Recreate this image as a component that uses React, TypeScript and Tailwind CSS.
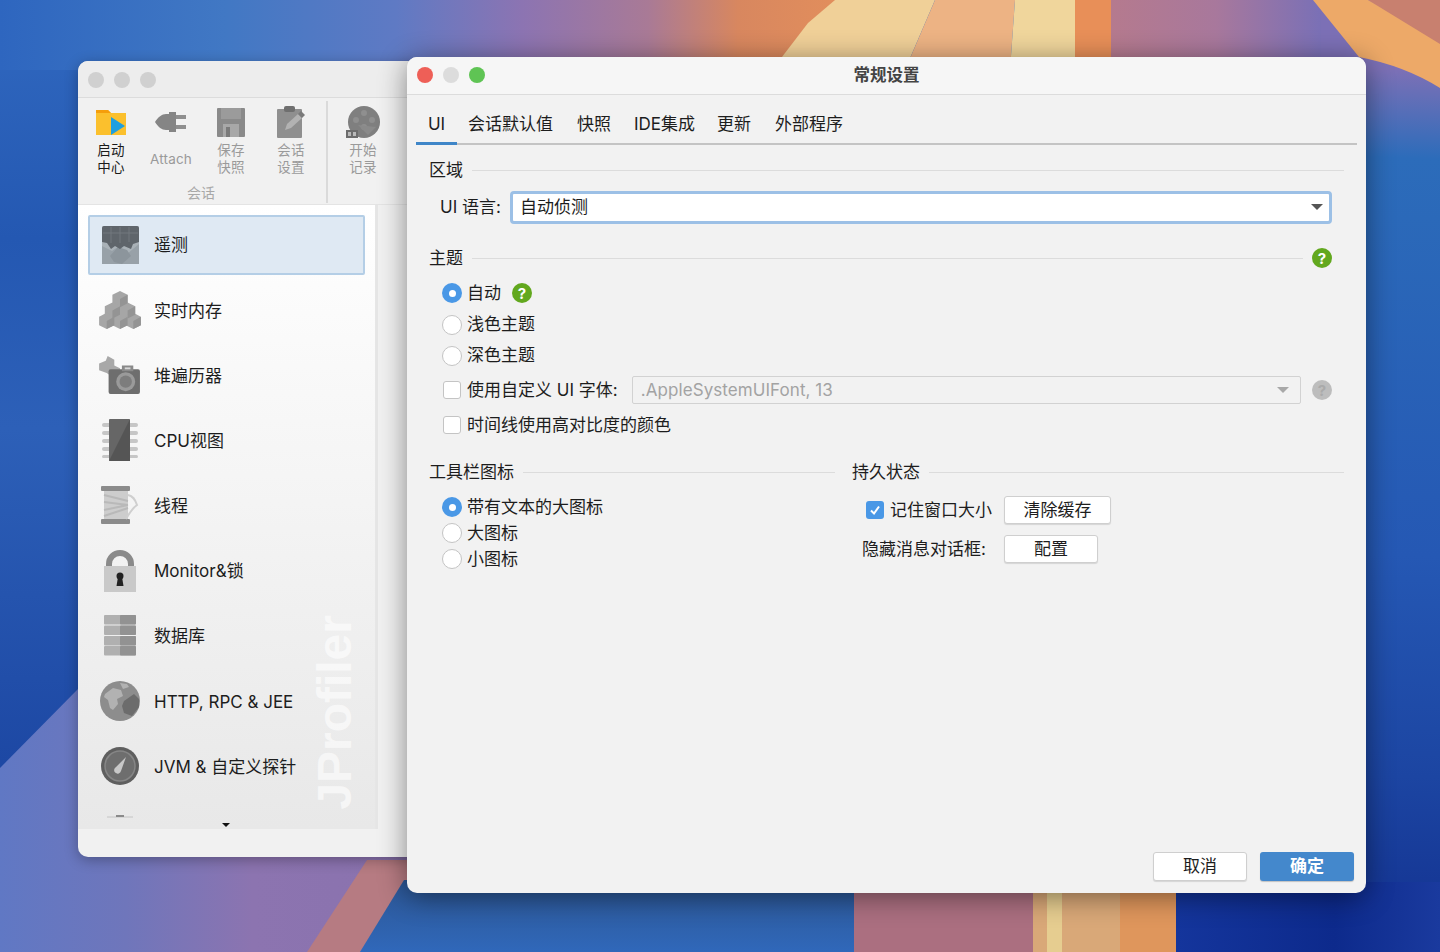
const SANS = "font-['Inter','Noto_Sans_CJK_SC',sans-serif]";

function Wallpaper() {
  return (
    <svg className="absolute inset-0 h-full w-full" viewBox="0 0 1440 952" preserveAspectRatio="none">
      <defs>
        <linearGradient id="left" x1="0" y1="0" x2="0" y2="1">
          <stop offset="0" stopColor="#3169c0" />
          <stop offset="0.25" stopColor="#2458b2" />
          <stop offset="0.45" stopColor="#2d60b8" />
          <stop offset="0.8" stopColor="#1d48a4" />
          <stop offset="1" stopColor="#1d48a4" />
        </linearGradient>
        <linearGradient id="top" x1="0" y1="0" x2="1" y2="0">
          <stop offset="0" stopColor="#2e66bf" />
          <stop offset="0.25" stopColor="#4178c4" />
          <stop offset="0.44" stopColor="#5f7ac4" />
          <stop offset="0.58" stopColor="#8c74b2" />
          <stop offset="0.72" stopColor="#a97a96" />
          <stop offset="0.82" stopColor="#d8875f" />
          <stop offset="1" stopColor="#e8925a" />
        </linearGradient>
        <linearGradient id="topRight" x1="0" y1="0" x2="1" y2="0">
          <stop offset="0" stopColor="#b57a8e" />
          <stop offset="0.5" stopColor="#a8789c" />
          <stop offset="1" stopColor="#7a70b6" />
        </linearGradient>
        <linearGradient id="purple" x1="0" y1="0" x2="1" y2="0">
          <stop offset="0" stopColor="#6078c4" />
          <stop offset="0.3" stopColor="#6f76bb" />
          <stop offset="0.6" stopColor="#8c74b0" />
          <stop offset="1" stopColor="#8a72ae" />
        </linearGradient>
        <linearGradient id="right" gradientUnits="userSpaceOnUse" x1="1410" y1="70" x2="1380" y2="952">
          <stop offset="0" stopColor="#7c70b6" />
          <stop offset="0.1" stopColor="#2c6cba" />
          <stop offset="0.55" stopColor="#2558b4" />
          <stop offset="0.8" stopColor="#1c45a2" />
          <stop offset="1" stopColor="#12308f" />
        </linearGradient>
        <linearGradient id="bottomBlue" x1="0" y1="0" x2="0" y2="1">
          <stop offset="0" stopColor="#2c5694" />
          <stop offset="1" stopColor="#3068ba" />
        </linearGradient>
        <linearGradient id="bottomDark" x1="0" y1="0" x2="1" y2="0">
          <stop offset="0" stopColor="#14359c" />
          <stop offset="0.6" stopColor="#0d2a8c" />
          <stop offset="1" stopColor="#1a3a9e" />
        </linearGradient>
      </defs>
      <rect width="1440" height="952" fill="url(#left)" />
      <rect x="0" y="0" width="900" height="70" fill="url(#top)" />
      <polygon points="0,768 78,689 420,500 420,952 0,952" fill="url(#purple)" />
      <polygon points="367,860 420,860 360,952 307,952" fill="#b67b82" />
      <polygon points="404,880 860,880 854,952 360,952" fill="url(#bottomBlue)" />
      <rect x="854" y="880" width="179" height="72" fill="#ab6f80" />
      <rect x="1033" y="880" width="87" height="72" fill="#d9a878" />
      <rect x="1047" y="880" width="15" height="72" fill="#e6cd90" />
      <rect x="1120" y="880" width="56" height="72" fill="#df965c" />
      <rect x="1176" y="880" width="264" height="72" fill="url(#bottomDark)" />
      <rect x="1340" y="50" width="100" height="832" fill="url(#right)" />
      <rect x="1111" y="0" width="210" height="70" fill="url(#topRight)" />
      <rect x="1321" y="0" width="119" height="70" fill="#7c70b6" />
      <path d="M835 0H935L905 70H772L808 23z" fill="#f0d098" />
      <polygon points="935,0 1015,0 1010,70 905,70" fill="#edb384" />
      <polygon points="1015,0 1075,0 1083,70 1010,70" fill="#f0d69c" />
      <rect x="1075" y="0" width="36" height="70" fill="#e88f58" />
      <polygon points="1368,0 1440,0 1440,50" fill="#c8806f" />
      <path d="M1313 0H1368L1440 44V88Q1405 66 1359 57z" fill="#eda968" />
    </svg>
  );
}

function Lights({ colors }: { colors: string[] }) {
  return (
    <div className="flex gap-[10px]">
      {colors.map((c, i) => (
        <svg key={i} width="16" height="16" viewBox="0 0 16 16">
          <circle cx="8" cy="8" r="8" fill={c} />
        </svg>
      ))}
    </div>
  );
}

function FolderIcon() {
  return (
    <svg width="32" height="27" viewBox="0 0 32 27">
      <path d="M1 1h12l3 3h15v22H1z" fill="#fbc02d" />
      <path d="M1 1h12l3 3H1z" fill="#f59e0b" />
      <path d="M16 8l14 9-14 9z" fill="#1e9fe0" />
    </svg>
  );
}

function PlugIcon() {
  return (
    <svg width="34" height="26" viewBox="0 0 34 26">
      <path d="M1 13c3-5 7-8 11-8h3V3h7v20h-7v-2h-3c-4 0-8-3-11-8z" fill="#858585" />
      <rect x="22" y="6" width="10" height="4" fill="#8f8f8f" />
      <rect x="22" y="16" width="10" height="4" fill="#8f8f8f" />
    </svg>
  );
}

function SaveIcon() {
  return (
    <svg width="28" height="29" viewBox="0 0 28 29">
      <rect width="28" height="29" rx="1" fill="#8a8a8a" />
      <rect x="4" y="0" width="20" height="11" fill="#9b9b9b" />
      <rect x="6" y="16" width="16" height="13" fill="#a8a8a8" />
      <rect x="9" y="19" width="4" height="10" fill="#7a7a7a" />
    </svg>
  );
}

function ClipboardIcon() {
  return (
    <svg width="28" height="32" viewBox="0 0 28 32">
      <rect x="0" y="3" width="25" height="29" rx="1" fill="#8f8f8f" />
      <rect x="7" y="0" width="11" height="6" rx="2" fill="#6f6f6f" />
      <path d="M8 24l2-6 11-10 4 4-11 10z" fill="#b2b2b2" />
      <path d="M21 8l4 4 3-3-4-4z" fill="#7a7a7a" />
    </svg>
  );
}

function RecordIcon() {
  return (
    <svg width="34" height="32" viewBox="0 0 34 32">
      <circle cx="18" cy="16" r="16" fill="#7f7f7f" />
      <circle cx="18" cy="7" r="3" fill="#8f8f8f" />
      <circle cx="10" cy="14" r="3" fill="#8f8f8f" />
      <circle cx="26" cy="14" r="3" fill="#8f8f8f" />
      <circle cx="18" cy="21" r="3" fill="#8f8f8f" />
      <path d="M12 19l10 10 8-8z" fill="#8a8a8a" />
      <rect x="0" y="24" width="12" height="8" fill="#6c6c6c" />
      <rect x="2" y="26" width="3" height="4" fill="#b9b9b9" />
      <rect x="7" y="26" width="3" height="4" fill="#b9b9b9" />
    </svg>
  );
}

function TelemetryIcon() {
  return (
    <svg width="37" height="38" viewBox="0 0 37 38">
      <rect width="37" height="38" rx="2" fill="#a9b1b7" />
      <path d="M0 20l10 5 7-5 8 8 12-10v20H0z" fill="#98a1a8" />
      <path d="M8 30l8-9 9 3 4 6-9 8-8-2z" fill="#8c959c" />
      <path d="M2 0h33a2 2 0 0 1 2 2v14l-6 2-2 5-7-3-4 3-5-3-4 3-4-6-5-1V2a2 2 0 0 1 2-2z" fill="#5f656b" />
      <path d="M9 1v16M18 1v16M27 1v15M1 7h35" stroke="#72787e" strokeWidth="1" />
    </svg>
  );
}

function CubesIcon() {
  return (
    <svg width="42" height="38" viewBox="0 0 44 40">
      <g fill="#a6a6a6">
        <path d="M22 0l8 4v9l-8 4-8-4V4z" />
        <path d="M14 12l8 4v9l-8 4-8-4v-9z" />
        <path d="M30 12l8 4v9l-8 4-8-4v-9z" />
        <path d="M8 23l8 4v9l-8 4-8-4v-9z" />
        <path d="M22 23l8 4v9l-8 4-8-4v-9z" />
        <path d="M36 23l8 4v9l-8 4-8-4v-9z" />
      </g>
      <g fill="#949494">
        <path d="M22 8.5l8-4.5v9l-8 4z" />
        <path d="M14 20.5l8-4.5v9l-8 4z" />
        <path d="M30 20.5l8-4.5v9l-8 4z" />
        <path d="M8 31.5l8-4.5v9l-8 4z" />
        <path d="M22 31.5l8-4.5v9l-8 4z" />
        <path d="M36 31.5l8-4.5v9l-8 4z" />
      </g>
    </svg>
  );
}

function CameraIcon() {
  return (
    <svg width="42" height="38" viewBox="0 0 44 40">
      <path d="M9 0l7 4v6l6 3v6l-8 3-6-4-8-3V8l7-3z" fill="#a8a8a8" />
      <rect x="10" y="14" width="33" height="26" rx="2" fill="#6e6e6e" />
      <rect x="24" y="10" width="12" height="6" fill="#8a8a8a" />
      <rect x="27" y="12" width="6" height="2" fill="#d8d8d8" />
      <circle cx="28" cy="27" r="10" fill="#9a9a9a" />
      <circle cx="28" cy="27" r="6.5" fill="#7d7d7d" />
    </svg>
  );
}

function ChipIcon() {
  return (
    <svg width="36" height="42" viewBox="0 0 36 42">
      <g fill="#c6c6c6">
        <rect x="0" y="4" width="36" height="4" rx="2" />
        <rect x="0" y="12" width="36" height="4" rx="2" />
        <rect x="0" y="20" width="36" height="4" rx="2" />
        <rect x="0" y="28" width="36" height="4" rx="2" />
        <rect x="0" y="36" width="36" height="3" rx="1.5" />
      </g>
      <rect x="7" y="0" width="21" height="42" rx="1" fill="#666666" />
      <path d="M28 0v42H7z" fill="#555555" />
    </svg>
  );
}

function SpoolIcon() {
  return (
    <svg width="38" height="38" viewBox="0 0 38 38">
      <rect x="3" y="5" width="24" height="28" fill="#cdcdcd" />
      <path d="M3 9l24 6M3 16l24 3M3 24l24-5M3 30l24-8" stroke="#b9b9b9" strokeWidth="2" />
      <rect x="0" y="0" width="29" height="5" rx="1" fill="#8b8b8b" />
      <rect x="0" y="33" width="29" height="5" rx="1" fill="#8b8b8b" />
      <path d="M27 9c5 1 7 4 9 10 -3 2-7 7-11 14" stroke="#cfcfcf" strokeWidth="2" fill="none" />
    </svg>
  );
}

function LockIcon() {
  return (
    <svg width="32" height="42" viewBox="0 0 32 42">
      <path d="M5 18V14a11 11 0 0 1 22 0v4" fill="none" stroke="#8a8a8a" strokeWidth="6" />
      <rect x="0" y="16" width="32" height="26" fill="#c9c9c9" />
      <circle cx="16" cy="26" r="3.5" fill="#222" />
      <path d="M14 27h4l1.5 9h-7z" fill="#222" />
    </svg>
  );
}

function DbIcon() {
  return (
    <svg width="32" height="41" viewBox="0 0 32 41">
      {[0, 10.5, 21, 31].map((y) => (
        <g key={y}>
          <rect x="0" y={y} width="32" height="9.5" rx="1" fill="#b0b0b0" />
          <rect x="16" y={y} width="16" height="9.5" rx="1" fill="#929292" />
        </g>
      ))}
    </svg>
  );
}

function GlobeIcon() {
  return (
    <svg width="40" height="40" viewBox="0 0 40 40">
      <circle cx="20" cy="20" r="20" fill="#8d8d8d" />
      <path d="M5 13l8-6 8 2 2 6-6 3 1 5-5 6-3-2-2-8-4-3z" fill="#b2b2b2" />
      <path d="M24 20l10-7 5 5 0 8-7 9-8-3-2-7z" fill="#6c6c6c" />
      <path d="M20 2l7 1 2 3-6 2z" fill="#b2b2b2" />
    </svg>
  );
}

function GaugeIcon() {
  return (
    <svg width="38" height="38" viewBox="0 0 38 38">
      <circle cx="19" cy="19" r="19" fill="#5f5f5f" />
      <circle cx="19" cy="19" r="15" fill="#6e6e6e" stroke="#868686" strokeWidth="1.5" />
      <path d="M15 20l10-10-5 14a3.5 3.5 0 1 1-5-4z" fill="#c8c8c8" />
    </svg>
  );
}

function PartialIcon() {
  return (
    <svg width="30" height="34" viewBox="0 0 30 34">
      <path d="M2 3h26" stroke="#c4c4c4" strokeWidth="1" />
      <path d="M11 2h8" stroke="#8a8a8a" strokeWidth="2" />
    </svg>
  );
}

const TOOLS = [
  { icon: <FolderIcon />, lines: ["启动", "中心"], dark: true },
  { icon: <PlugIcon />, lines: ["Attach"], dark: false },
  { icon: <SaveIcon />, lines: ["保存", "快照"], dark: false },
  { icon: <ClipboardIcon />, lines: ["会话", "设置"], dark: false },
];

const ITEMS = [
  { icon: <TelemetryIcon />, label: "遥测", active: true },
  { icon: <CubesIcon />, label: "实时内存" },
  { icon: <CameraIcon />, label: "堆遍历器" },
  { icon: <ChipIcon />, label: "CPU视图" },
  { icon: <SpoolIcon />, label: "线程" },
  { icon: <LockIcon />, label: "Monitor&锁" },
  { icon: <DbIcon />, label: "数据库" },
  { icon: <GlobeIcon />, label: "HTTP, RPC & JEE" },
  { icon: <GaugeIcon />, label: "JVM & 自定义探针" },
  { icon: <PartialIcon />, label: "" },
];

function ToolButton({ icon, lines, dark }: { icon: React.ReactNode; lines: string[]; dark?: boolean }) {
  return (
    <div className="flex w-[60px] flex-col items-center">
      <div className="flex h-[36px] items-center justify-center">{icon}</div>
      <div
        className={`flex h-[38px] flex-col items-center justify-center text-[13.5px] leading-[17px] tracking-[0.2px] ${
          dark ? "text-[#1a1a1a]" : "text-[#9a9a9a]"
        }`}
      >
        {lines.map((l) => (
          <span key={l}>{l}</span>
        ))}
      </div>
    </div>
  );
}

function MainWindow() {
  return (
    <div className="absolute left-[78px] top-[61px] flex h-[796px] w-[340px] flex-col overflow-hidden rounded-[10px] bg-[#f1f1f1] shadow-[0_3px_14px_rgba(0,0,0,0.3)]">
      <div className="flex h-[37px] items-center border-b border-[#dcdcdc] bg-[#ededed] pl-[10px] pt-[1px]">
        <Lights colors={["#d0d0d0", "#d0d0d0", "#d0d0d0"]} />
      </div>
      <div className="flex h-[107px] border-b border-[#e4e4e4] pl-[3px] pt-[3px]">
        <div className="flex w-[240px] flex-col">
          <div className="flex pt-[3px]">
            {TOOLS.map((t) => (
              <ToolButton key={t.lines[0]} icon={t.icon} lines={t.lines} dark={t.dark} />
            ))}
          </div>
          <div className="mt-[6px] text-center text-[14px] leading-[18px] text-[#a8a8a8]">会话</div>
        </div>
        <div className="mx-[5px] h-[102px] w-[2px] bg-[#dadada]" />
        <div className="pt-[3px]">
          <ToolButton icon={<RecordIcon />} lines={["开始", "记录"]} />
        </div>
      </div>
      <div className="flex min-h-0 flex-1">
        <div className="relative h-[624px] w-[297px] overflow-hidden bg-gradient-to-b from-white to-[#e8e8e8] pt-[7px]">
          {ITEMS.map((item) => (
            <div key={item.label} className="flex h-[65.2px] items-center px-[10px]">
              <div
                className={`flex h-[60px] w-full items-center gap-[12px] rounded-[2px] border-2 pl-[8px] ${
                  item.active ? "border-[#b4cee6] bg-[#dfe9f3]" : "border-transparent"
                }`}
              >
                <div className="flex h-[44px] w-[44px] shrink-0 items-center justify-center">{item.icon}</div>
                <span className="whitespace-nowrap pt-[3px] text-[17px] text-[#1d1d1d]">{item.label}</span>
              </div>
            </div>
          ))}
          <span className="absolute bottom-[2px] left-[144px] h-0 w-0 border-x-[4px] border-t-[4px] border-x-transparent border-t-[#111]" />
          <span className="absolute bottom-[19px] right-[16px] rotate-180 font-['Liberation_Sans',sans-serif] text-[48px] font-bold leading-[48px] text-white/60 [writing-mode:vertical-rl]">
            JProfiler
          </span>
        </div>
        <div className="h-[624px] w-[3px] bg-[#e6e6e6]" />
      </div>
    </div>
  );
}

function Radio({ checked }: { checked?: boolean }) {
  return (
    <span
      className={`flex h-[20px] w-[20px] shrink-0 items-center justify-center rounded-full ${
        checked ? "bg-[#4a98e6]" : "border border-[#c4c4c4] bg-white"
      }`}
    >
      {checked && <span className="h-[7px] w-[7px] rounded-full bg-white" />}
    </span>
  );
}

function Check({ checked }: { checked?: boolean }) {
  return (
    <span
      className={`flex h-[18px] w-[18px] shrink-0 items-center justify-center rounded-[3px] ${
        checked ? "bg-[#4a98e6]" : "border border-[#c4c4c4] bg-white"
      }`}
    >
      {checked && (
        <svg width="12" height="12" viewBox="0 0 12 12">
          <path d="M2 6.5l3 3 5-7" fill="none" stroke="#fff" strokeWidth="2" />
        </svg>
      )}
    </span>
  );
}

function Help({ disabled }: { disabled?: boolean }) {
  return (
    <span
      className={`flex h-[20px] w-[20px] shrink-0 items-center justify-center rounded-full text-[15px] font-bold leading-none ${
        disabled ? "bg-[#bdbdbd] text-[#aaaaaa]" : "bg-[#62a81e] text-white"
      }`}
    >
      ?
    </span>
  );
}

function SectionTitle({ label, right }: { label: string; right?: React.ReactNode }) {
  return (
    <div className="-ml-[1px] flex h-[24px] items-center gap-[9px]">
      <span className="whitespace-nowrap pt-[1px] text-[17px] text-[#1d1d1d]">{label}</span>
      <span className="h-px flex-1 bg-[#dcdcdc]" />
      {right}
    </div>
  );
}

function Option({ label, checked, h }: { label: string; checked?: boolean; h: string }) {
  return (
    <div className={`flex items-center gap-[5px] pl-[12px] ${h}`}>
      <Radio checked={checked} />
      <span className="whitespace-nowrap pt-[1px] text-[17px] text-[#1d1d1d]">{label}</span>
    </div>
  );
}

function PlainButton({ label, w, h }: { label: string; w: string; h: string }) {
  return (
    <button className={`rounded-[3px] border border-[#cfcfcf] bg-white pt-[1px] text-[17px] text-[#1d1d1d] shadow-[0_1px_1px_rgba(0,0,0,0.12)] ${w} ${h}`}>
      {label}
    </button>
  );
}

function SettingsDialog() {
  return (
    <div className="absolute left-[407px] top-[57px] flex h-[836px] w-[959px] flex-col rounded-[10px] bg-[#f2f2f2] shadow-[0_4px_28px_rgba(0,0,0,0.45)]">
      <div className="relative flex h-[38px] items-center justify-center rounded-t-[10px] border-b border-[#dcdcdc] bg-[#f6f6f6]">
        <div className="absolute left-[10px] top-[10px]">
          <Lights colors={["#ee5f57", "#dcdcdc", "#5fc454"]} />
        </div>
        <span className="text-[16.5px] font-semibold text-[#444]">常规设置</span>
      </div>

      <div className="mx-[9px] mt-[11px] flex h-[39px] w-[941px] border-b-2 border-[#c4c4c4]">
        <div className="-mb-[2px] flex h-[39px] w-[41px] justify-center border-b-[3px] border-[#3f86c8] pt-[6px] text-[17px] text-[#1d1d1d]">UI</div>
        <div className="ml-[11px] flex gap-[24px] pt-[6px] text-[17px] text-[#1d1d1d]">
          <span className="w-[85px] whitespace-nowrap">会话默认值</span>
          <span className="w-[33px] whitespace-nowrap">快照</span>
          <span className="w-[59px] whitespace-nowrap">IDE集成</span>
          <span className="w-[34px] whitespace-nowrap">更新</span>
          <span className="w-[68px] whitespace-nowrap">外部程序</span>
        </div>
      </div>

      <div className="mx-[23px] mt-[13px] w-[914px]">
        <SectionTitle label="区域" />
        <div className="mt-[9px] flex h-[32px] w-[901px] items-center">
          <span className="ml-[10px] w-[71px] shrink-0 whitespace-nowrap pt-[1px] text-[17px] text-[#1d1d1d]">UI 语言:</span>
          <div className="-ml-[1px] -mr-[1px] flex h-[33px] flex-1 items-center justify-between rounded-[4px] border-[3px] border-[#9cc0e6] bg-white pl-[7px] pr-[6px] text-[17px] text-[#1d1d1d]">
            <span className="pt-[1px]">自动侦测</span>
            <span className="h-0 w-0 border-x-[6px] border-t-[6px] border-x-transparent border-t-[#555]" />
          </div>
        </div>

        <div className="mt-[23px] w-[902px]">
          <SectionTitle label="主题" right={<Help />} />
        </div>
        <div className="mt-[7px]">
          <div className="flex h-[32px] items-center">
            <Option label="自动" checked h="h-[32px]" />
            <span className="ml-[11px]">
              <Help />
            </span>
          </div>
          <Option label="浅色主题" h="h-[31px]" />
          <Option label="深色主题" h="h-[31px]" />
          <div className="mt-[4px] flex h-[30px] w-[902px] items-center pl-[13px]">
            <Check />
            <span className="ml-[6px] w-[165px] whitespace-nowrap pt-[1px] text-[17px] text-[#1d1d1d]">使用自定义 UI 字体:</span>
            <div className="flex h-[28px] w-[670px] items-center justify-between rounded-[2px] border border-[#d2d2d2] pl-[8px] pr-[11px] text-[17px] text-[#a3a3a3]">
              <span className="pt-[1px] tracking-[0.07px]">.AppleSystemUIFont, 13</span>
              <span className="h-0 w-0 border-x-[6px] border-t-[6px] border-x-transparent border-t-[#a8a8a8]" />
            </div>
            <span className="ml-[11px]">
              <Help disabled />
            </span>
          </div>
          <div className="mt-[5px] flex h-[30px] items-center pl-[13px]">
            <Check />
            <span className="ml-[6px] whitespace-nowrap pt-[1px] text-[17px] text-[#1d1d1d]">时间线使用高对比度的颜色</span>
          </div>
        </div>

        <div className="mt-[20px] grid grid-cols-[405px_492px] gap-x-[17px]">
          <div>
            <SectionTitle label="工具栏图标" />
            <div className="mt-[10px]">
              <Option label="带有文本的大图标" checked h="h-[26px]" />
              <Option label="大图标" h="h-[26px]" />
              <Option label="小图标" h="h-[26px]" />
            </div>
          </div>
          <div>
            <div className="pl-[1px]">
              <SectionTitle label="持久状态" />
            </div>
            <div className="mt-[12px] flex h-[28px] items-center pl-[14px]">
              <Check checked />
              <span className="ml-[6px] w-[114px] whitespace-nowrap pt-[1px] text-[17px] text-[#1d1d1d]">记住窗口大小</span>
              <PlainButton label="清除缓存" w="w-[107px]" h="h-[28px]" />
            </div>
            <div className="mt-[11px] flex h-[28px] items-center pl-[10px]">
              <span className="w-[142px] whitespace-nowrap pt-[1px] text-[17px] text-[#1d1d1d]">隐藏消息对话框:</span>
              <PlainButton label="配置" w="w-[94px]" h="h-[28px]" />
            </div>
          </div>
        </div>
      </div>

      <div className="mt-auto flex justify-end gap-[13px] pb-[12px] pr-[12px]">
        <PlainButton label="取消" w="w-[94px]" h="h-[29px]" />
        <button className="h-[29px] w-[94px] rounded-[3px] bg-[#4488cc] pt-[1px] text-[17px] font-semibold text-white shadow-[0_1px_1px_rgba(0,0,0,0.2)]">
          确定
        </button>
      </div>
    </div>
  );
}

export default function App() {
  return (
    <div className={`relative h-[952px] w-[1440px] overflow-hidden ${SANS}`}>
      <Wallpaper />
      <MainWindow />
      <SettingsDialog />
    </div>
  );
}
